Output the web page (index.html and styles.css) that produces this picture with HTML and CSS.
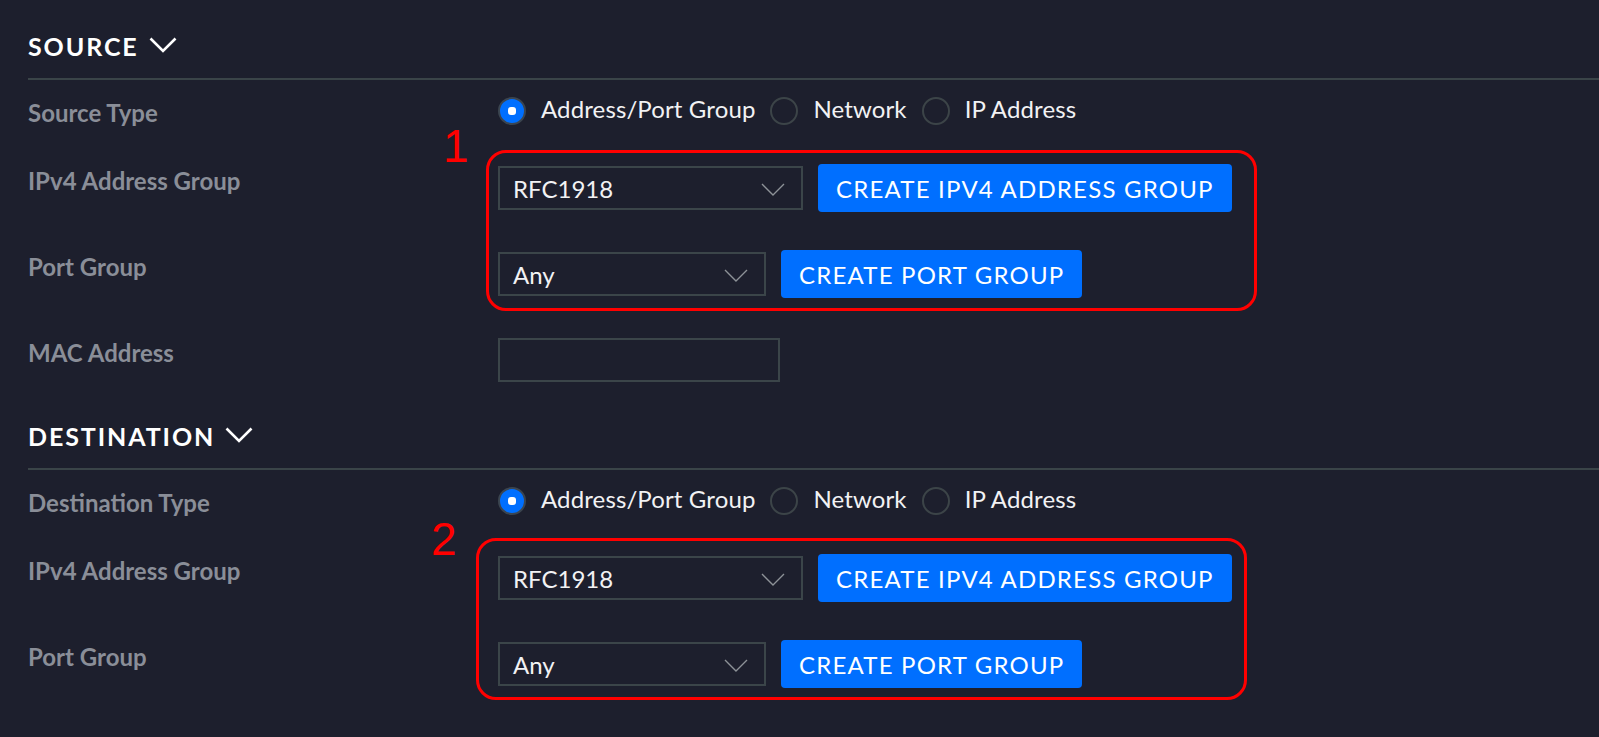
FILE: index.html
```html
<!DOCTYPE html>
<html lang="en">
<head>
<meta charset="utf-8">
<title>Firewall rule</title>
<link rel="stylesheet" href="styles.css">
</head>
<body>
<main class="page">
  <section class="sect sect-first">
    <h2 class="sect-title">SOURCE <svg class="sect-chev" width="28" height="16" viewBox="0 0 28 16"><path d="M1.5 1.5 L14 14 L26.5 1.5" fill="none" stroke="#fff" stroke-width="2.6"/></svg></h2>
    <div class="form">
      <div class="row row-radio">
        <div class="label">Source Type</div>
        <div class="ctrl radios">
          <span class="radio on"></span><span class="rlabel">Address/Port Group</span>
          <span class="radio"></span><span class="rlabel">Network</span>
          <span class="radio"></span><span class="rlabel">IP Address</span>
        </div>
      </div>
      <div class="row">
        <div class="label">IPv4 Address Group</div>
        <div class="ctrl">
          <div class="select sel-lg"><span>RFC1918</span><svg class="sel-chev" width="24" height="13" viewBox="0 0 24 13"><path d="M1 1 L12 12 L23 1" fill="none" stroke="#8d9297" stroke-width="1.4"/></svg></div>
          <button class="btn">CREATE IPV4 ADDRESS GROUP</button>
        </div>
      </div>
      <div class="row">
        <div class="label">Port Group</div>
        <div class="ctrl">
          <div class="select sel-sm"><span>Any</span><svg class="sel-chev" width="24" height="13" viewBox="0 0 24 13"><path d="M1 1 L12 12 L23 1" fill="none" stroke="#8d9297" stroke-width="1.4"/></svg></div>
          <button class="btn">CREATE PORT GROUP</button>
        </div>
      </div>
      <div class="row">
        <div class="label">MAC Address</div>
        <div class="ctrl">
          <div class="input"></div>
        </div>
      </div>
    </div>
  </section>

  <section class="sect">
    <h2 class="sect-title">DESTINATION <svg class="sect-chev" width="28" height="16" viewBox="0 0 28 16"><path d="M1.5 1.5 L14 14 L26.5 1.5" fill="none" stroke="#fff" stroke-width="2.6"/></svg></h2>
    <div class="form">
      <div class="row row-radio">
        <div class="label">Destination Type</div>
        <div class="ctrl radios">
          <span class="radio on"></span><span class="rlabel">Address/Port Group</span>
          <span class="radio"></span><span class="rlabel">Network</span>
          <span class="radio"></span><span class="rlabel">IP Address</span>
        </div>
      </div>
      <div class="row">
        <div class="label">IPv4 Address Group</div>
        <div class="ctrl">
          <div class="select sel-lg"><span>RFC1918</span><svg class="sel-chev" width="24" height="13" viewBox="0 0 24 13"><path d="M1 1 L12 12 L23 1" fill="none" stroke="#8d9297" stroke-width="1.4"/></svg></div>
          <button class="btn">CREATE IPV4 ADDRESS GROUP</button>
        </div>
      </div>
      <div class="row">
        <div class="label">Port Group</div>
        <div class="ctrl">
          <div class="select sel-sm"><span>Any</span><svg class="sel-chev" width="24" height="13" viewBox="0 0 24 13"><path d="M1 1 L12 12 L23 1" fill="none" stroke="#8d9297" stroke-width="1.4"/></svg></div>
          <button class="btn">CREATE PORT GROUP</button>
        </div>
      </div>
    </div>
  </section>

  <div class="annot annot-1"></div>
  <span class="annot-num num-1">1</span>
  <div class="annot annot-2"></div>
  <span class="annot-num num-2">2</span>
</main>
</body>
</html>
```

FILE: styles.css
```css
html, body {
  margin: 0;
  padding: 0;
  background: #1d1f2d;
}
body {
  font-family: Lato, "Open Sans", sans-serif;
  color: #f2f2f4;
  height: 737px;
  overflow: hidden;
}
.page {
  position: relative;
  padding-left: 28px;
}
.sect {
  padding-top: 37px;
}
.sect-first {
  padding-top: 31px;
}
.sect-title {
  margin: 0;
  font-size: 25px;
  line-height: 30px;
  font-weight: 700;
  letter-spacing: 1.9px;
  color: #ffffff;
  padding-bottom: 17px;
  border-bottom: 2px solid #3a4448;
  display: flex;
  align-items: center;
}
.sect-chev {
  margin-left: 10px;
  margin-top: -3px;
}
.form {
  display: flex;
  flex-direction: column;
  gap: 38px;
  padding-top: 17px;
}
.row {
  display: grid;
  grid-template-columns: 470px 1fr;
  align-items: start;
  height: 48px;
}
.row-radio {
  height: 28px;
  margin-bottom: 1px;
}
.label {
  font-size: 24px;
  line-height: 28px;
  font-weight: 700;
  color: #8a8e98;
  padding-top: 3px;
  white-space: nowrap;
}
.row-radio .label {
  padding-top: 2px;
}
.ctrl {
  display: flex;
  align-items: center;
  gap: 15px;
  height: 48px;
}
.row-radio .ctrl {
  height: 28px;
}
.radios {
  gap: 0;
}
.radio {
  width: 28px;
  height: 28px;
  box-sizing: border-box;
  border: 2px solid #3c4448;
  border-radius: 50%;
  display: flex;
  align-items: center;
  justify-content: center;
  flex: none;
}
.radio.on {
  background: #006fff;
  border-color: #3b4550;
}
.radio.on::after {
  content: "";
  width: 8px;
  height: 8px;
  border-radius: 3px;
  background: #ffffff;
}
.rlabel {
  font-size: 24px;
  line-height: 28px;
  letter-spacing: 0.12px;
  margin: -4px 15px 0 15px;
  color: #f2f2f4;
  white-space: nowrap;
}
.select, .input {
  height: 44px;
  box-sizing: border-box;
  border: 2px solid #3b4549;
  display: flex;
  align-items: center;
  justify-content: space-between;
  padding: 0 16px 0 13px;
  font-size: 24px;
  color: #f2f2f4;
  flex: none;
}
.sel-lg { width: 305px; }
.sel-sm { width: 268px; }
.input { width: 282px; }
.sel-chev {
  flex: none;
  margin-top: 2px;
}
.btn {
  height: 48px;
  border: 0;
  border-radius: 4px;
  background: #006fff;
  color: #ffffff;
  font-family: Lato, "Open Sans", sans-serif;
  font-size: 24px;
  letter-spacing: 1.2px;
  padding: 0 18px 0 18px;
  cursor: pointer;
  white-space: nowrap;
}
.annot {
  position: absolute;
  box-sizing: border-box;
  border: 3px solid #ff0000;
  border-radius: 20px;
}
.annot-1 {
  left: 486px;
  top: 150px;
  width: 771px;
  height: 161px;
}
.annot-2 {
  left: 476px;
  top: 538px;
  width: 771px;
  height: 162px;
}
.annot-num {
  position: absolute;
  font-family: "Liberation Sans", Arial, sans-serif;
  font-size: 46px;
  line-height: 46px;
  color: #ff0000;
}
.num-1 {
  left: 443px;
  top: 123px;
}
.num-2 {
  left: 431px;
  top: 516px;
}
```
